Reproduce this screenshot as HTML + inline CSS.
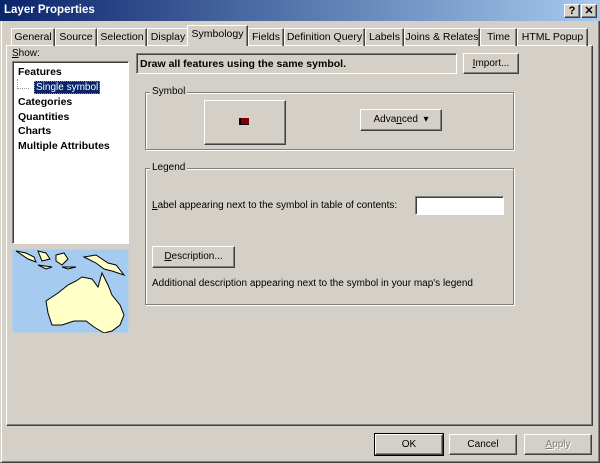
<!DOCTYPE html>
<html><head><style>
*{margin:0;padding:0;box-sizing:border-box}
body{width:600px;height:463px;background:#d4d0c8;font-family:"Liberation Sans",sans-serif;font-size:10px;color:#000;position:relative;overflow:hidden}
.a{position:absolute}
.title{left:0;top:0;width:600px;height:21px;background:linear-gradient(90deg,#0a246a,#a6caf0);color:#fff;font-weight:bold;font-size:11.5px;padding:4px 0 0 4px}
.win{left:0;top:0;width:600px;height:463px;border:1px solid;border-color:#d4d0c8 #404040 #404040 #d4d0c8;box-shadow:inset 1px 1px #fff,inset -1px -1px #808080}
.btn{background:#d4d0c8;border:1px solid;border-color:#fff #404040 #404040 #fff;box-shadow:inset -1px -1px #808080;text-align:center}
.cap{width:16px;height:14px;top:4px;font-weight:bold;font-size:11px;line-height:12px}
.tab{top:28px;height:18px;border:1px solid;border-bottom:none;border-color:#fff #404040 #404040 #fff;box-shadow:inset -1px 0 #808080;text-align:center;line-height:16px;font-size:10.5px;white-space:nowrap}
.panel{left:6px;top:45px;width:587px;height:381px;border:1px solid;border-color:#fff #404040 #404040 #fff;box-shadow:inset -1px -1px #808080}
.sunk{border:1px solid;border-color:#808080 #fff #fff #808080;box-shadow:inset 1px 1px #404040}
.grp{border:1px solid #808080;box-shadow:1px 1px #fff,inset 1px 1px #fff}
.lg{background:#d4d0c8;padding:0 2px}
</style></head><body>
<div class="a win"></div>
<div class="a title">Layer Properties</div>
<div class="a btn cap" style="left:564px">?</div>
<div class="a btn cap" style="left:581px">✕</div>

<div class="a panel"></div>
<div class="a tab" style="left:11px;width:44px">General</div>
<div class="a tab" style="left:55px;width:42px">Source</div>
<div class="a tab" style="left:97px;width:50px">Selection</div>
<div class="a tab" style="left:147px;width:42px">Display</div>
<div class="a tab" style="left:187px;width:61px;top:25px;height:21px;background:#d4d0c8;z-index:2">Symbology</div>
<div class="a tab" style="left:248px;width:36px">Fields</div>
<div class="a tab" style="left:284px;width:81px">Definition Query</div>
<div class="a tab" style="left:365px;width:39px">Labels</div>
<div class="a tab" style="left:404px;width:76px">Joins &amp; Relates</div>
<div class="a tab" style="left:480px;width:37px">Time</div>
<div class="a tab" style="left:517px;width:71px">HTML Popup</div>

<div class="a" style="left:12px;top:48px"><u>S</u>how:</div>
<div class="a sunk" style="left:12px;top:61px;width:117px;height:183px;background:#fff;padding:3px 0 0 5px;font-weight:bold;line-height:14.5px;font-size:10.5px">
Features<br>
<span style="font-weight:normal;margin-left:16px;background:#0a246a;color:#fff;padding:0 1px;border:1px dotted #888;font-size:10px">Single symbol</span><br>
Categories<br>Quantities<br>Charts<br>Multiple Attributes
</div>
<div class="a" style="left:17px;top:79px;width:1px;height:10px;border-left:1px dotted #999"></div>
<div class="a" style="left:17px;top:88px;width:12px;border-top:1px dotted #999"></div>

<svg class="a" style="left:12px;top:249px" width="117" height="84" viewBox="0 0 117 84">
<rect x="0" y="0" width="117" height="84" fill="#a6cbf0" stroke="#d4d0c8"/>
<g fill="#ffffc8" stroke="#000" stroke-width="1">
<path d="M4 2 L16 10 L24 13 L22 8 L14 4 Z"/>
<path d="M26 2 L34 4 L38 10 L30 12 Z"/>
<path d="M44 6 L52 4 L56 10 L50 16 L44 12 Z"/>
<path d="M26 16 L40 18 L34 20 Z"/>
<path d="M50 18 L64 18 L56 20 Z"/>
<path d="M72 8 L84 6 L96 14 L104 16 L112 26 L100 22 L92 20 L84 14 Z"/>
<path d="M46 44 L56 36 L64 32 L70 28 L80 30 L86 38 L90 24 L96 36 L100 46 L108 56 L112 66 L108 76 L100 82 L92 84 L82 78 L74 72 L62 72 L50 76 L40 76 L36 64 L34 52 Z"/>
</g></svg>

<div class="a sunk" style="left:136px;top:53px;width:321px;height:21px;padding:4px 0 0 3px;font-weight:bold;font-size:10.5px">Draw all features using the same symbol.</div>
<div class="a btn" style="left:463px;top:53px;width:56px;height:21px;line-height:19px"><u>I</u>mport...</div>

<div class="a grp" style="left:145px;top:92px;width:369px;height:58px"></div>
<div class="a lg" style="left:150px;top:86px">Symbol</div>
<div class="a btn" style="left:204px;top:100px;width:82px;height:45px"></div>
<div class="a" style="left:239px;top:118px;width:10px;height:7px;background:#800000;border-left:2px solid #000;border-bottom:1px solid #000"></div>
<div class="a btn" style="left:360px;top:109px;width:82px;height:22px;line-height:20px">Adva<u>n</u>ced &nbsp;▾</div>

<div class="a grp" style="left:145px;top:168px;width:369px;height:137px"></div>
<div class="a lg" style="left:150px;top:162px">Legend</div>
<div class="a" style="left:152px;top:200px"><u>L</u>abel appearing next to the symbol in table of contents:</div>
<div class="a sunk" style="left:415px;top:196px;width:89px;height:19px;background:#fff"></div>
<div class="a btn" style="left:152px;top:246px;width:83px;height:22px;line-height:20px"><u>D</u>escription...</div>
<div class="a" style="left:152px;top:278px">Additional description appearing next to the symbol in your map's legend</div>

<div class="a btn" style="left:375px;top:434px;width:68px;height:21px;line-height:19px;outline:1px solid #000">OK</div>
<div class="a btn" style="left:449px;top:434px;width:68px;height:21px;line-height:19px">Cancel</div>
<div class="a btn" style="left:524px;top:434px;width:68px;height:21px;line-height:19px;color:#808080;text-shadow:1px 1px #fff"><u>A</u>pply</div>
</body></html>
